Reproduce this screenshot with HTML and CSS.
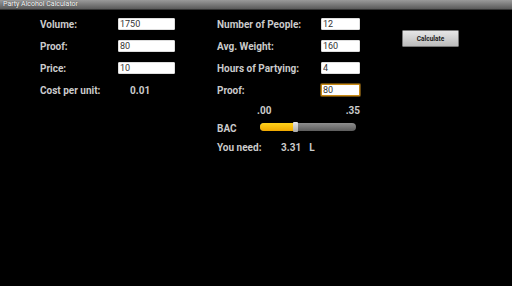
FILE: index.html
```html
<!DOCTYPE html>
<html lang="en">
<head>
    <meta charset="UTF-8">
    <meta name="viewport" content="width=device-width, initial-scale=1.0">
    <title>Party Alcohol Calculator</title>
    <link rel="stylesheet" href="styles.css">
</head>
<body>
    <div class="titlebar">Party Alcohol Calculator</div>

    <div class="main">
        <div class="form left">
            <label>Volume:</label>
            <div class="field"><input type="text" value="1750"></div>
            <label>Proof:</label>
            <div class="field"><input type="text" value="80"></div>
            <label>Price:</label>
            <div class="field"><input type="text" value="10"></div>
            <label>Cost per unit:</label>
            <div class="value cost">0.01</div>
        </div>

        <div class="right">
            <div class="form people">
                <label>Number of People:</label>
                <div class="field"><input type="text" value="12"></div>
                <label>Avg. Weight:</label>
                <div class="field"><input type="text" value="160"></div>
                <label>Hours of Partying:</label>
                <div class="field"><input type="text" value="4"></div>
                <label>Proof:</label>
                <div class="field"><input type="text" class="focused" value="80"></div>
            </div>

            <div class="bac">
                <div class="scale"><span>.00</span><span>.35</span></div>
                <div class="bac-row">
                    <label>BAC</label>
                    <div class="slider">
                        <div class="fill" style="width: 36%"></div>
                        <div class="thumb" style="left: 34.5%"></div>
                    </div>
                </div>
                <div class="need-row">
                    <label>You need:</label>
                    <span class="value amount">3.31</span>
                    <span class="value unit">L</span>
                </div>
            </div>
        </div>

        <div class="actions">
            <button class="calc">Calculate</button>
        </div>
    </div>
</body>
</html>
```

FILE: styles.css
```css
body {
    margin: 0;
    padding: 0;
    background-color: #000;
    color: #cfcfcf;
    font-family: Roboto, "Liberation Sans", sans-serif;
    width: 512px;
    height: 286px;
    overflow: hidden;
}

.titlebar {
    height: 9px;
    line-height: 9px;
    padding-left: 3px;
    font-size: 7px;
    color: #fff;
    background: linear-gradient(#9a9a9a, #5a5a5a);
    border-bottom: 1px solid #333;
    text-shadow: 0 0 1px #222;
}

.main {
    display: flex;
    padding-top: 3px;
}

label {
    font-size: 10px;
    font-weight: bold;
    color: #cbcbcb;
}

.form {
    display: grid;
    grid-auto-rows: 22px;
    align-items: center;
}

.left {
    margin-left: 40px;
    grid-template-columns: 78px 57px;
}

.right {
    margin-left: 42px;
    width: 145px;
}

.people {
    grid-template-columns: 104px 39px;
}

.field {
    display: flex;
}

input {
    box-sizing: border-box;
    width: 100%;
    height: 12px;
    margin: 0;
    padding: 0 1px;
    border: 1px solid #ddd;
    border-radius: 1px;
    background-color: #fff;
    color: #333;
    font-family: Roboto, "Liberation Sans", sans-serif;
    font-size: 9px;
    line-height: 10px;
    outline: none;
}

input.focused {
    border-color: #c98a12;
    box-shadow: 0 0 0 1px #6a4a10;
}

.value {
    font-size: 10px;
    font-weight: bold;
    color: #cbcbcb;
}

.cost {
    padding-left: 12px;
}

.bac {
    display: flex;
    flex-direction: column;
}

.scale {
    display: flex;
    justify-content: space-between;
    width: 103px;
    margin-left: 40px;
    margin-top: 4px;
    font-size: 10px;
    font-weight: bold;
    color: #cbcbcb;
    line-height: 12px;
}

.bac-row {
    display: flex;
    align-items: center;
    height: 14px;
    margin-top: 3px;
}

.bac-row label {
    width: 43px;
    padding-top: 2px;
}

.slider {
    position: relative;
    width: 96px;
    height: 8px;
    border-radius: 4px;
    background: linear-gradient(#8e8e8e, #5c5c5c);
}

.fill {
    height: 100%;
    border-radius: 4px 0 0 4px;
    background: linear-gradient(#ffd21a, #f0a800);
}

.thumb {
    position: absolute;
    top: -1px;
    width: 5px;
    height: 10px;
    border-radius: 1px;
    background: linear-gradient(#e8e8e8, #a8a8a8);
}

.need-row {
    display: flex;
    align-items: center;
    height: 14px;
    margin-top: 6px;
}

.need-row label {
    width: 64px;
}

.unit {
    margin-left: 8px;
}

.actions {
    margin-left: 40px;
    padding-top: 17px;
}

.calc {
    display: block;
    width: 57px;
    height: 17px;
    padding: 0;
    border: 1px solid #777;
    border-radius: 1px;
    background: linear-gradient(#e6e6e6, #bcbcbc);
    color: #222;
    font-family: Roboto, "Liberation Sans", sans-serif;
    font-size: 6.5px;
    font-weight: bold;
}
```
